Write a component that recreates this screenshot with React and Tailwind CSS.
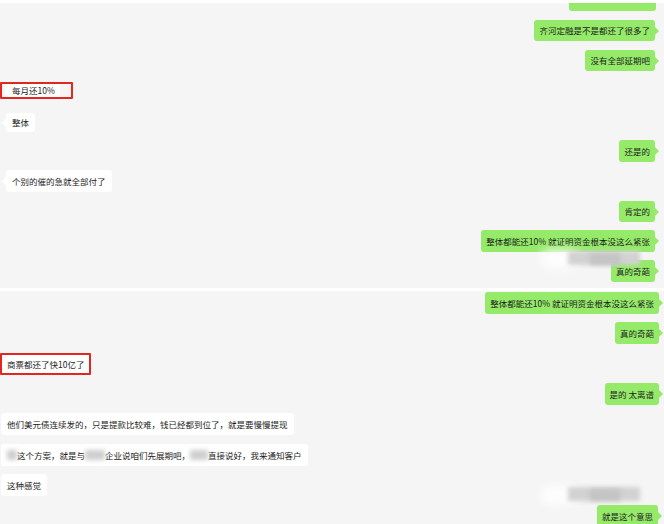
import React from 'react'

const font = { fontFamily: '"Noto Sans CJK SC", "Noto Sans", sans-serif' }

function Tail({ side }) {
  if (side === 'right') {
    return (
      <span className="absolute right-[-4px] top-1/2 -translate-y-1/2 w-0 h-0 border-y-[4px] border-y-transparent border-l-[4px] border-l-[#95ea6a]" />
    )
  }
  return (
    <span className="absolute left-[-4px] top-1/2 -translate-y-1/2 w-0 h-0 border-y-[4px] border-y-transparent border-r-[4px] border-r-white" />
  )
}

function Mine({ text, mt = 'mt-[8px]', h = 'h-[22px]', pr = 'pr-[9px]' }) {
  return (
    <div className={`flex justify-end ${pr} ${mt}`}>
      <div className={`relative ${h} flex items-center px-[5px] rounded-[3px] bg-[#95ea6a] text-[8.5px] text-[#1c1c1c] whitespace-nowrap`}>
        {text}
        <Tail side="right" />
      </div>
    </div>
  )
}

function Theirs({ children, mt = 'mt-[8px]', h = 'h-[22px]', pl = 'pl-[6px]', tail = true }) {
  return (
    <div className={`flex ${pl} ${mt}`}>
      <div className={`relative ${h} flex items-center px-[6px] rounded-[3px] bg-white text-[8.5px] text-[#1c1c1c] whitespace-nowrap`}>
        {children}
        {tail && <Tail side="left" />}
      </div>
    </div>
  )
}

function Smudge({ className }) {
  return (
    <div className={`absolute pointer-events-none ${className}`}>
      <div className="absolute left-0 top-[2px] w-[40px] h-[20px] rounded-full bg-white/80 blur-[4px]" />
      <div className="absolute left-[28px] top-[4px] w-[72px] h-[14px] bg-[#d2d2d2] blur-[2px]" />
      <div className="absolute left-[50px] top-[6px] w-[30px] h-[12px] bg-[#c4c4c4] blur-[2px]" />
    </div>
  )
}

function Blot({ w }) {
  return <span className={`inline-block h-[10px] ${w} bg-[#cfcfcf] blur-[2px] align-middle`} />
}

export default function App() {
  return (
    <div className="w-[664px] h-[524px] bg-white overflow-hidden" style={font}>
      {/* first screenshot */}
      <div className="relative h-[285px] mt-[3px] bg-[#f5f5f5] overflow-hidden">
        {/* bubble cut by the top edge */}
        <div className="h-[8px] overflow-hidden flex items-end justify-end pr-[8px]">
          <div className="h-[22px] w-[87px] rounded-[3px] bg-[#95ea6a] flex items-end justify-center pb-[14px] gap-[3px]">
            <span className="w-[30px] h-[3px] bg-[#5c7a4c] blur-[1px]" />
            <span className="w-[40px] h-[3px] bg-[#5c7a4c] blur-[1px]" />
          </div>
        </div>
        <Mine text="齐河定融是不是都还了很多了" mt="mt-[9px]" h="h-[21px]" />
        <Mine text="没有全部延期吧" mt="mt-[9px]" h="h-[21px]" />
        <div className="mt-[11px] w-[73px] h-[17px] border-2 border-[#e3261f] rounded-[1px] flex">
          <div className="ml-[3px] w-[55px] h-full bg-white flex items-center pl-[7px] text-[8.5px] text-[#1c1c1c] whitespace-nowrap">
            每月还10%
          </div>
        </div>
        <Theirs mt="mt-[14px]" h="h-[19px]">整体</Theirs>
        <Mine text="还是的" />
        <Theirs>个别的催的急就全部付了</Theirs>
        <Mine text="肯定的" mt="mt-[9px]" h="h-[21px]" />
        <Mine text="整体都能还10% 就证明资金根本没这么紧张" />
        <Mine text="真的奇葩" />
        <Smudge className="left-[540px] top-[244px] w-[104px] h-[24px]" />
      </div>

      {/* second screenshot */}
      <div className="relative h-[233px] mt-[3px] bg-[#f5f5f5] overflow-hidden">
        <Mine text="整体都能还10% 就证明资金根本没这么紧张" mt="mt-[1px]" pr="pr-[5px]" />
        <Mine text="真的奇葩" pr="pr-[5px]" />
        <div className="mt-[9px] w-[91px] h-[22px] border-2 border-[#e3261f] rounded-[1px] bg-white flex items-center pl-[5px] text-[8.5px] text-[#1c1c1c] whitespace-nowrap">
          商票都还了快10亿了
        </div>
        <Mine text="是的 太离谱" pr="pr-[5px]" />
        <Theirs pl="pl-[1px]" tail={false}>他们美元债连续发的，只是提款比较难，钱已经都到位了，就是要慢慢提现</Theirs>
        <Theirs pl="pl-[1px]" mt="mt-[9px]" tail={false}>
          <Blot w="w-[10px]" />
          <span>这个方案，就是与</span>
          <Blot w="w-[20px]" />
          <span>企业说咱们先展期吧，</span>
          <Blot w="w-[18px]" />
          <span>直接说好，我来通知客户</span>
        </Theirs>
        <Theirs pl="pl-[1px]" tail={false}>这种感觉</Theirs>
        <Mine text="就是这个意思" mt="mt-[9px]" pr="pr-[6px]" />
        <Smudge className="left-[540px] top-[192px] w-[104px] h-[26px]" />
      </div>
    </div>
  )
}
